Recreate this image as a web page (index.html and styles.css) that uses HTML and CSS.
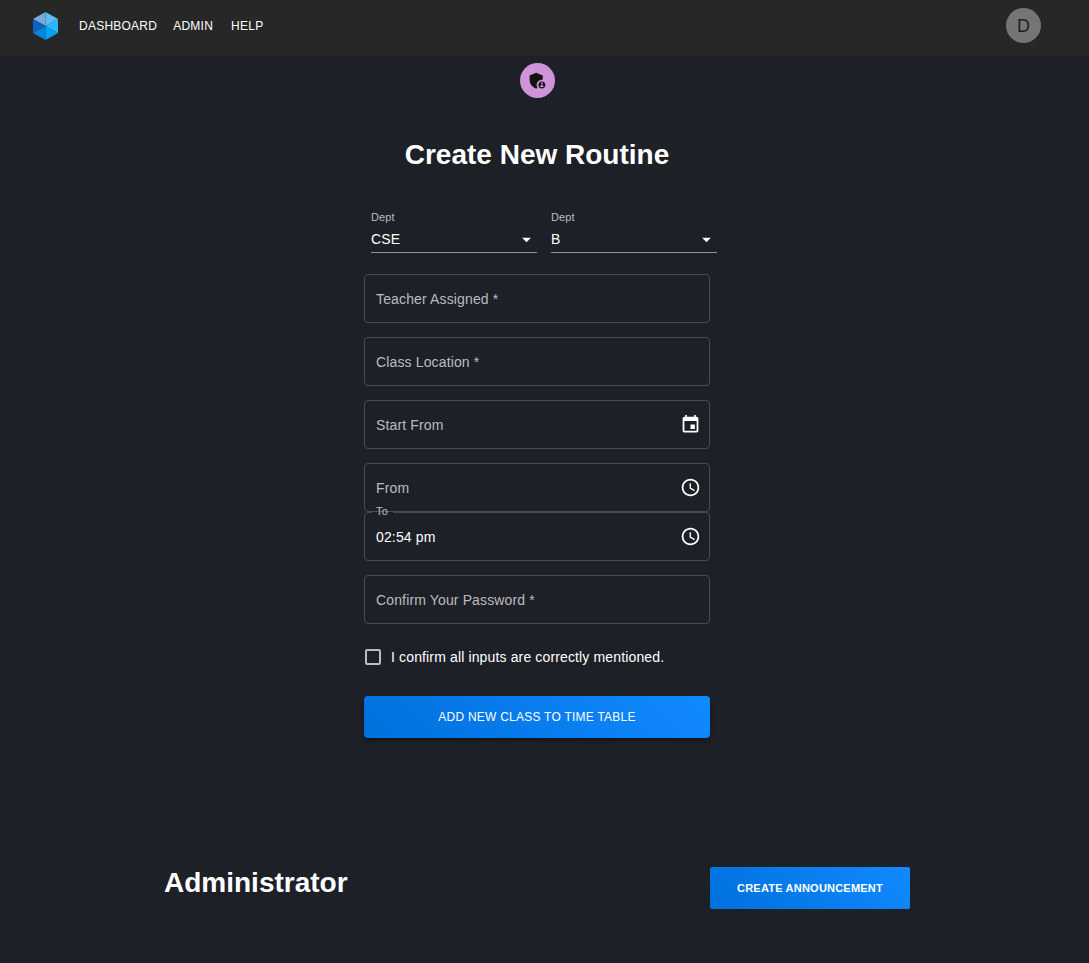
FILE: index.html
```html
<!DOCTYPE html>
<html lang="en">
<head>
  <meta charset="utf-8">
  <meta name="viewport" content="width=device-width, initial-scale=1">
  <title>Create New Routine</title>
  <link rel="stylesheet" href="styles.css">
</head>
<body>
  <header class="topbar">
    <a class="logo" href="#" aria-label="Home">
      <svg width="25" height="28" viewBox="0 0 25 28">
        <path fill="#7aa9d8" d="M12.500 0 0 7l12.500 7z"/>
        <path fill="#5cbdf5" d="M12.500 0 25 7l-12.500 7z"/>
        <path fill="#0c62bd" d="M0 7l12.500 7L0 21z"/>
        <path fill="#0a84dc" d="M0 21l12.500-7v14z"/>
        <path fill="#02a4f6" d="M12.500 14 25 21l-12.500 7z"/>
        <path fill="#2fb6fa" d="M25 7v14l-12.500-7z"/>
      </svg>
    </a>
    <nav class="nav">
      <a class="nav-link" href="#">Dashboard</a>
      <a class="nav-link" href="#">Admin</a>
      <a class="nav-link" href="#">Help</a>
    </nav>
    <button class="avatar" type="button" aria-label="Account">D</button>
  </header>

  <main class="page">
    <section class="routine">
      <div class="badge">
        <svg width="21" height="21" viewBox="0 0 24 24" fill="#121212">
          <path d="M17 11c.34 0 .67.04 1 .09V6.27L10.500 3 3 6.270v4.910c0 4.540 3.200 8.790 7.500 9.820.55-.13 1.080-.32 1.600-.55-.69-.98-1.100-2.170-1.100-3.450 0-3.310 2.690-6 6-6z"/>
          <path d="M17 13c-2.210 0-4 1.790-4 4s1.790 4 4 4 4-1.790 4-4-1.790-4-4-4zm0 1.380c.62 0 1.120.51 1.120 1.120s-.51 1.120-1.120 1.120-1.120-.51-1.120-1.120.5-1.120 1.120-1.120zm0 5.370c-.93 0-1.740-.46-2.240-1.170.05-.72 1.510-1.080 2.240-1.080s2.190.36 2.240 1.080c-.5.71-1.310 1.170-2.240 1.170z"/>
        </svg>
      </div>
      <h1 class="title">Create New Routine</h1>

      <form class="form">
        <div class="selects">
          <div class="select-field">
            <label class="small-label" for="dept">Dept</label>
            <select class="select" id="dept"><option>CSE</option><option>EEE</option></select>
            <svg class="caret" width="21" height="21" viewBox="0 0 24 24"><path fill="#fff" d="M7 10l5 5 5-5z"/></svg>
          </div>
          <div class="select-field">
            <label class="small-label" for="section">Dept</label>
            <select class="select" id="section"><option>B</option><option>A</option></select>
            <svg class="caret" width="21" height="21" viewBox="0 0 24 24"><path fill="#fff" d="M7 10l5 5 5-5z"/></svg>
          </div>
        </div>

        <div class="field">
          <input class="input" id="teacher" type="text" required>
          <label class="label" for="teacher">Teacher Assigned *</label>
        </div>
        <div class="field">
          <input class="input" id="location" type="text" required>
          <label class="label" for="location">Class Location *</label>
        </div>
        <div class="field">
          <input class="input" id="start" type="text">
          <label class="label" for="start">Start From</label>
          <button class="picker" type="button" aria-label="Choose date">
            <svg width="21" height="21" viewBox="0 0 24 24" fill="#fff"><path d="M17 12h-5v5h5v-5zM16 1v2H8V1H6v2H5c-1.110 0-1.990.9-1.990 2L3 19c0 1.100.89 2 2 2h14c1.100 0 2-.9 2-2V5c0-1.100-.9-2-2-2h-1V1h-2zm3 18H5V8h14v11z"/></svg>
          </button>
        </div>
        <div class="times">
          <div class="field">
            <input class="input" id="from" type="text">
            <label class="label" for="from">From</label>
            <button class="picker" type="button" aria-label="Choose start time">
              <svg width="21" height="21" viewBox="0 0 24 24" fill="#fff"><path d="M11.990 2C6.470 2 2 6.480 2 12s4.470 10 9.990 10C17.520 22 22 17.520 22 12S17.520 2 11.990 2zM12 20c-4.420 0-8-3.580-8-8s3.580-8 8-8 8 3.580 8 8-3.580 8-8 8z"/><path d="M12.500 7H11v6l5.250 3.150.75-1.230-4.500-2.670z"/></svg>
            </button>
          </div>
          <div class="field field-filled">
            <input class="input" id="to" type="text" value="02:54 pm">
            <label class="float-label" for="to">To</label>
            <button class="picker" type="button" aria-label="Choose end time">
              <svg width="21" height="21" viewBox="0 0 24 24" fill="#fff"><path d="M11.990 2C6.470 2 2 6.480 2 12s4.470 10 9.990 10C17.520 22 22 17.520 22 12S17.520 2 11.990 2zM12 20c-4.420 0-8-3.580-8-8s3.580-8 8-8 8 3.580 8 8-3.580 8-8 8z"/><path d="M12.500 7H11v6l5.250 3.150.75-1.230-4.500-2.670z"/></svg>
            </button>
            <fieldset class="outline" aria-hidden="true"><legend class="notch"></legend></fieldset>
          </div>
        </div>
        <div class="field">
          <input class="input" id="password" type="password" required>
          <label class="label" for="password">Confirm Your Password *</label>
        </div>

        <label class="confirm"><input class="checkbox" type="checkbox">I confirm all inputs are correctly mentioned.</label>

        <button class="button button-submit" type="submit">Add new class to time table</button>
      </form>
    </section>

    <section class="admin">
      <h2 class="title">Administrator</h2>
      <button class="button button-announce" type="button">Create Announcement</button>
    </section>
  </main>
</body>
</html>
```
FILE: styles.css
```css
* { box-sizing: border-box; }

body {
  margin: 0;
  min-height: 100vh;
  background: #1e2028;
  color: #fff;
  font: 14px/20px "Liberation Sans", Arial, sans-serif;
  letter-spacing: 0.01em;
}

button, input, select { font: inherit; letter-spacing: inherit; color: inherit; }
button { cursor: pointer; }
svg { display: block; }

.topbar {
  display: flex;
  align-items: center;
  height: 56px;
  padding: 0 48px 5px 33px;
  background: #272727;
}

.nav {
  display: flex;
  gap: 16px;
  margin-left: 21px;
}

.nav-link {
  color: #fff;
  font-size: 12px;
  letter-spacing: 0.02em;
  text-decoration: none;
  text-transform: uppercase;
}

.nav-link:last-child { margin-left: 2px; }

.avatar {
  width: 35px;
  height: 35px;
  margin-left: auto;
  padding: 0;
  border: 0;
  border-radius: 50%;
  background: #757575;
  color: #1e1e1e;
  font-size: 18px;
}

.page {
  display: flex;
  flex-direction: column;
  align-items: center;
  padding: 7px 15px 54px 0;
}

.routine {
  display: flex;
  flex-direction: column;
  align-items: center;
  width: 100%;
  max-width: 346px;
}

.badge {
  display: grid;
  place-items: center;
  width: 35px;
  height: 35px;
  border-radius: 50%;
  background: #ce93d8;
}

.title {
  margin: 0;
  font-size: 28px;
  line-height: 40px;
  letter-spacing: normal;
}

.routine .title { margin-top: 37px; }

.form {
  display: flex;
  flex-direction: column;
  gap: 14px;
  width: 100%;
  margin-top: 35px;
}

.selects {
  display: flex;
  gap: 14px;
  margin: 0 -7px 7px 7px;
}

.select-field {
  display: grid;
  flex: 1;
}

.small-label, .float-label {
  color: #bcbcbf;
  font-size: 11px;
  line-height: 14px;
}

.select {
  grid-area: 2 / 1;
  height: 29px;
  padding: 2px 21px 0 0;
  border: 0;
  border-bottom: 1px solid #949599;
  border-radius: 0;
  background: transparent;
  appearance: none;
}

.select option { background: #272727; }

.caret {
  grid-area: 2 / 1;
  place-self: end;
  margin-bottom: 3px;
  pointer-events: none;
}

.field {
  position: relative;
  display: grid;
  align-items: center;
}

.input {
  grid-area: 1 / 1;
  width: 100%;
  height: 49px;
  padding: 0 40px 0 11px;
  border: 1px solid #4a4b4e;
  border-radius: 4px;
  background: transparent;
}

.field-filled .input { border-color: transparent; }

.label {
  grid-area: 1 / 1;
  justify-self: start;
  padding-left: 12px;
  color: #bcbcbf;
  pointer-events: none;
}

.picker {
  grid-area: 1 / 1;
  justify-self: end;
  margin-right: 9px;
  padding: 0;
  border: 0;
  background: transparent;
}

.float-label {
  position: absolute;
  top: -8px;
  left: 12px;
}

.outline {
  position: absolute;
  inset: 0;
  margin: 0;
  padding: 0 7px;
  border: 1px solid #4a4b4e;
  border-radius: 4px;
  pointer-events: none;
}

.notch {
  width: 21px;
  height: 1px;
  padding: 0;
}

.confirm {
  display: flex;
  align-items: center;
  gap: 10px;
  height: 38px;
}

.checkbox {
  width: 16px;
  height: 16px;
  margin: 0 0 0 1px;
  border: 2px solid #bcbcbf;
  border-radius: 2px;
  appearance: none;
}

.checkbox:checked { background: #0a7cf0; }

.button {
  height: 42px;
  border: 0;
  border-radius: 4px;
  background: linear-gradient(45deg, #0070dc, #118aff);
  font-size: 12px;
  letter-spacing: 0.02em;
  text-transform: uppercase;
}

.button-submit {
  margin-top: 6px;
  box-shadow: 0 2px 4px rgba(0, 0, 0, 0.4);
}

.admin {
  display: flex;
  justify-content: space-between;
  align-items: flex-start;
  width: 100%;
  max-width: 746px;
  margin-top: 129px;
}

.admin .title { margin-top: -4px; }

.button-announce {
  width: 200px;
  border-radius: 2px;
  font-size: 11px;
  font-weight: 700;
}
```
